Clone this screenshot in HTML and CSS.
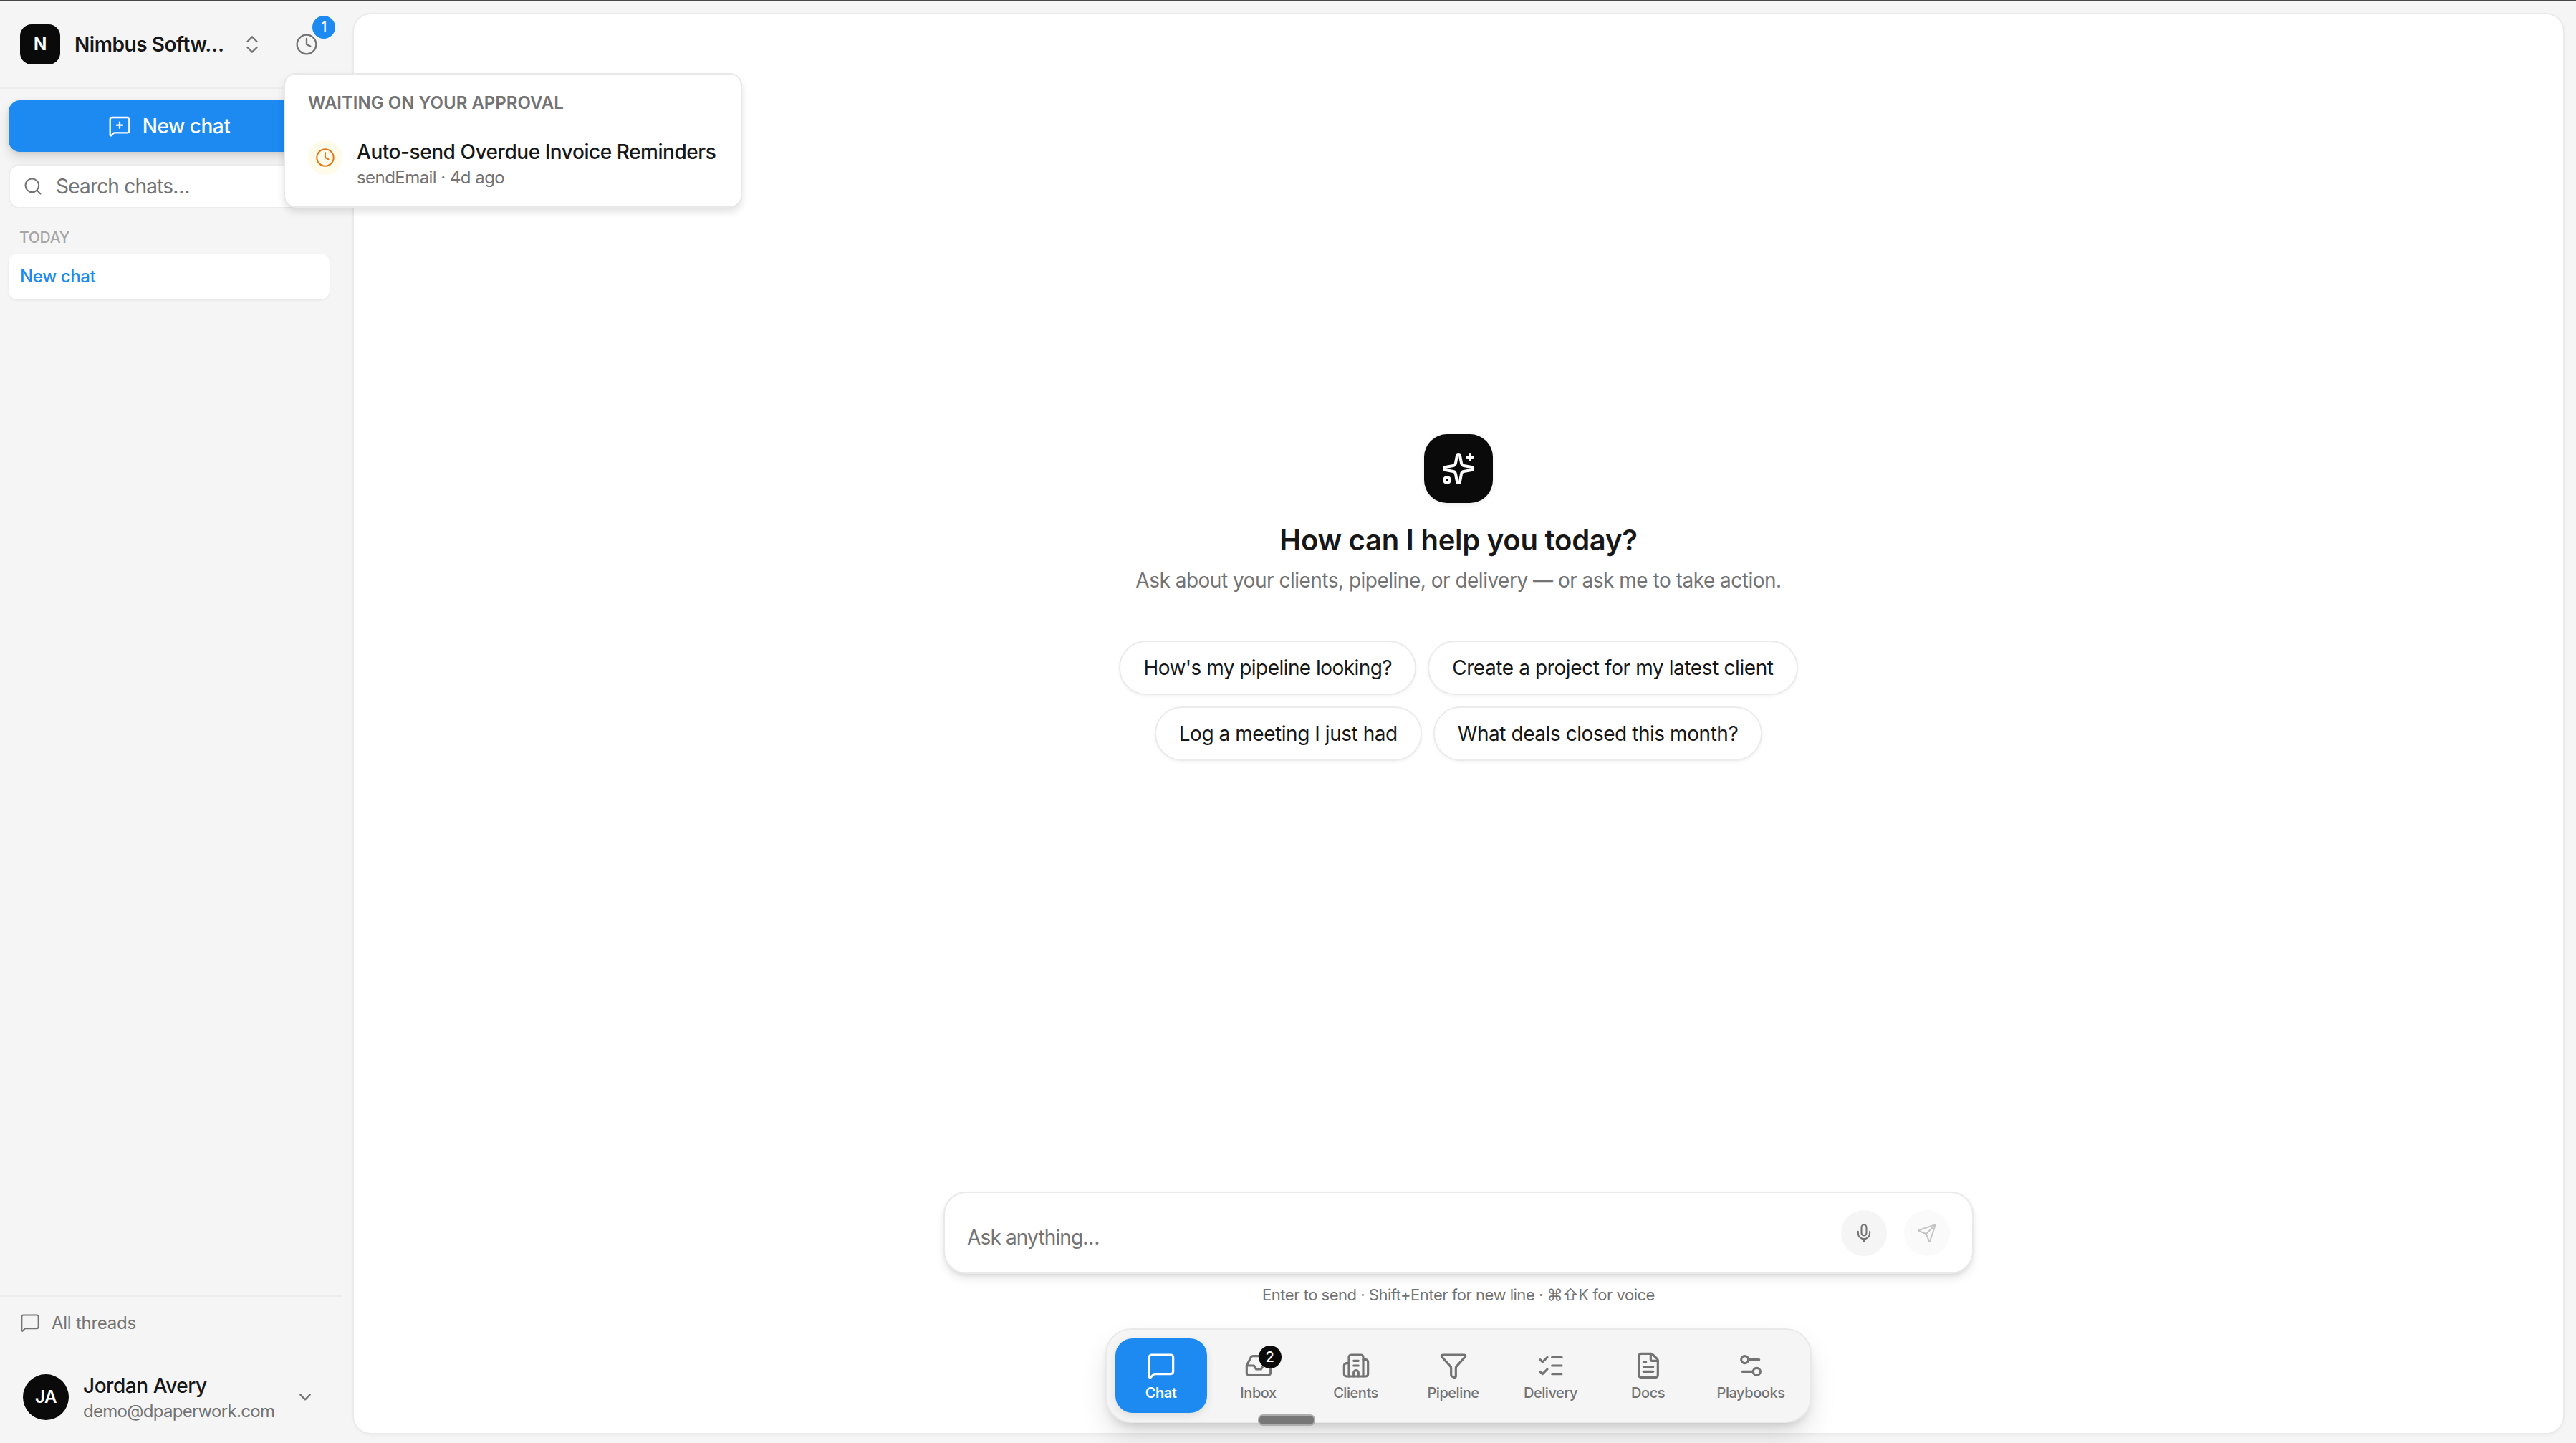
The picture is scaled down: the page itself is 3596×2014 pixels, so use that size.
FILE: index.html
```html
<!DOCTYPE html>
<html lang="en">
<head>
    <meta charset="UTF-8">
    <meta name="viewport" content="width=device-width, initial-scale=1.0">
    <title>Nimbus Software - Chat</title>
    <link rel="stylesheet" href="styles.css">
</head>
<body>
    <div class="app">
        <aside class="sidebar">
            <header class="workspace">
                <div class="logo">N</div>
                <div class="workspace-name">Nimbus Softw…</div>
                <svg class="icon icon-32" viewBox="0 0 24 24"><path d="m7 15 5 5 5-5"/><path d="m7 9 5-5 5 5"/></svg>
                <button class="approvals">
                    <svg class="icon icon-32" viewBox="0 0 24 24"><circle cx="12" cy="12" r="10"/><path d="M12 6v6l4 2"/></svg>
                    <span class="badge badge-blue">1</span>
                </button>
            </header>

            <nav class="chats">
                <button class="new-chat">
                    <svg class="icon icon-32" viewBox="0 0 24 24"><path d="M22 17a2 2 0 0 1-2 2H6.828a2 2 0 0 0-1.414.586l-2.202 2.202A.71.71 0 0 1 2 21.286V5a2 2 0 0 1 2-2h16a2 2 0 0 1 2 2z"/><path d="M12 8v6"/><path d="M9 11h6"/></svg>
                    <span>New chat</span>
                </button>
                <div class="search">
                    <svg class="icon icon-28" viewBox="0 0 24 24"><path d="m21 21-4.34-4.34"/><circle cx="11" cy="11" r="8"/></svg>
                    <span>Search chats…</span>
                </div>
                <div class="group-label">TODAY</div>
                <a class="chat-item">New chat</a>
            </nav>

            <footer class="sidebar-footer">
                <a class="all-threads">
                    <svg class="icon icon-28" viewBox="0 0 24 24"><path d="M22 17a2 2 0 0 1-2 2H6.828a2 2 0 0 0-1.414.586l-2.202 2.202A.71.71 0 0 1 2 21.286V5a2 2 0 0 1 2-2h16a2 2 0 0 1 2 2z"/></svg>
                    <span>All threads</span>
                </a>
                <div class="user">
                    <div class="avatar">JA</div>
                    <div class="user-info">
                        <div class="user-name">Jordan Avery</div>
                        <div class="user-email">demo@dpaperwork.com</div>
                    </div>
                    <svg class="icon icon-32" viewBox="0 0 24 24"><path d="m7 9.5 5 5 5-5"/></svg>
                </div>
            </footer>
        </aside>

        <main class="main">
            <section class="hero">
                <div class="hero-icon">
                    <svg class="icon icon-48" viewBox="0 0 24 24"><path d="M11.017 2.814a1 1 0 0 1 1.966 0l1.051 5.558a2 2 0 0 0 1.594 1.594l5.558 1.051a1 1 0 0 1 0 1.966l-5.558 1.051a2 2 0 0 0-1.594 1.594l-1.051 5.558a1 1 0 0 1-1.966 0l-1.051-5.558a2 2 0 0 0-1.594-1.594l-5.558-1.051a1 1 0 0 1 0-1.966l5.558-1.051a2 2 0 0 0 1.594-1.594z"/><path d="M20 2v4"/><path d="M22 4h-4"/><circle cx="4" cy="20" r="2"/></svg>
                </div>
                <h1>How can I help you today?</h1>
                <p>Ask about your clients, pipeline, or delivery — or ask me to take action.</p>
                <div class="suggestions">
                    <button class="chip">How's my pipeline looking?</button>
                    <button class="chip">Create a project for my latest client</button>
                    <button class="chip">Log a meeting I just had</button>
                    <button class="chip">What deals closed this month?</button>
                </div>
            </section>

            <div class="composer">
                <div class="composer-input">Ask anything…</div>
                <button class="round-button">
                    <svg class="icon icon-28" viewBox="0 0 24 24"><path d="M12 19v3"/><path d="M19 10v2a7 7 0 0 1-14 0v-2"/><rect x="9" y="2" width="6" height="13" rx="3"/></svg>
                </button>
                <button class="round-button disabled">
                    <svg class="icon icon-28" viewBox="0 0 24 24"><path d="M14.536 21.686a.5.5 0 0 0 .937-.024l6.5-19a.496.496 0 0 0-.635-.635l-19 6.5a.5.5 0 0 0-.024.937l7.93 3.18a2 2 0 0 1 1.112 1.11z"/><path d="m21.854 2.147-10.94 10.939"/></svg>
                </button>
            </div>
            <div class="hint">Enter to send · Shift+Enter for new line · ⌘⇧K for voice</div>

            <nav class="dock">
                <a class="dock-item active">
                    <svg class="icon icon-40" viewBox="0 0 24 24"><path d="M22 17a2 2 0 0 1-2 2H6.828a2 2 0 0 0-1.414.586l-2.202 2.202A.71.71 0 0 1 2 21.286V5a2 2 0 0 1 2-2h16a2 2 0 0 1 2 2z"/></svg>
                    <span>Chat</span>
                </a>
                <a class="dock-item">
                    <svg class="icon icon-40" viewBox="0 0 24 24"><path d="M22 12h-6l-2 3h-4l-2-3H2"/><path d="M5.45 5.11 2 12v6a2 2 0 0 0 2 2h16a2 2 0 0 0 2-2v-6l-3.45-6.89A2 2 0 0 0 16.76 4H7.24a2 2 0 0 0-1.79 1.11z"/></svg>
                    <span>Inbox</span>
                    <b class="badge badge-black">2</b>
                </a>
                <a class="dock-item">
                    <svg class="icon icon-40" viewBox="0 0 24 24"><path d="M10 12h4"/><path d="M10 8h4"/><path d="M14 21v-3a2 2 0 0 0-4 0v3"/><path d="M6 10H4a2 2 0 0 0-2 2v7a2 2 0 0 0 2 2h16a2 2 0 0 0 2-2V9a2 2 0 0 0-2-2h-2"/><path d="M6 21V5a2 2 0 0 1 2-2h8a2 2 0 0 1 2 2v16"/></svg>
                    <span>Clients</span>
                </a>
                <a class="dock-item">
                    <svg class="icon icon-40" viewBox="0 0 24 24"><path d="M10 20a1 1 0 0 0 .553.895l2 1A1 1 0 0 0 14 21v-7a2 2 0 0 1 .517-1.341L21.74 4.67A1 1 0 0 0 21 3H3a1 1 0 0 0-.742 1.67l7.225 7.989A2 2 0 0 1 10 14z"/></svg>
                    <span>Pipeline</span>
                </a>
                <a class="dock-item">
                    <svg class="icon icon-40" viewBox="0 0 24 24"><path d="M13 5h8"/><path d="M13 12h8"/><path d="M13 19h8"/><path d="m3 17 2 2 4-4"/><path d="m3 7 2 2 4-4"/></svg>
                    <span>Delivery</span>
                </a>
                <a class="dock-item">
                    <svg class="icon icon-40" viewBox="0 0 24 24"><path d="M6 22a2 2 0 0 1-2-2V4a2 2 0 0 1 2-2h8a2.4 2.4 0 0 1 1.704.706l3.588 3.588A2.4 2.4 0 0 1 20 8v12a2 2 0 0 1-2 2z"/><path d="M14 2v5a1 1 0 0 0 1 1h5"/><path d="M10 9H8"/><path d="M16 13H8"/><path d="M16 17H8"/></svg>
                    <span>Docs</span>
                </a>
                <a class="dock-item">
                    <svg class="icon icon-40" viewBox="0 0 24 24"><path d="M14 17H5"/><path d="M19 7h-9"/><circle cx="17" cy="17" r="3"/><circle cx="7" cy="7" r="3"/></svg>
                    <span>Playbooks</span>
                </a>
            </nav>
        </main>
    </div>

    <div class="popover">
        <div class="popover-title">WAITING ON YOUR APPROVAL</div>
        <div class="approval">
            <div class="approval-icon">
                <svg class="icon icon-28" viewBox="0 0 24 24"><circle cx="12" cy="12" r="10"/><path d="M12 6v6l4 2"/></svg>
            </div>
            <div>
                <div class="approval-name">Auto-send Overdue Invoice Reminders</div>
                <div class="approval-meta">sendEmail · 4d ago</div>
            </div>
        </div>
    </div>
    <div class="drag-handle"></div>
</body>
</html>
```
FILE: styles.css
```css
* {
    box-sizing: border-box;
}
body {
    margin: 0;
    width: 3596px;
    height: 2014px;
    overflow: hidden;
    position: relative;
    font-family: Inter, 'DejaVu Sans', sans-serif;
    font-size: 28px;
    letter-spacing: -0.45px;
    color: #171717;
    background: #f5f5f5;
    border-top: 2px solid #484646;
}
button {
    font: inherit;
    color: inherit;
    letter-spacing: inherit;
    border: none;
    background: none;
    padding: 0;
}
.app {
    display: flex;
    height: 2012px;
}
.icon {
    fill: none;
    stroke: currentColor;
    stroke-width: 1.75;
    stroke-linecap: round;
    stroke-linejoin: round;
    flex: none;
    display: block;
}
.icon-28 {
    width: 28px;
    height: 28px;
}
.icon-32 {
    width: 32px;
    height: 32px;
}
.icon-40 {
    width: 40px;
    height: 40px;
    stroke-width: 1.9;
}
.icon-48 {
    width: 48px;
    height: 48px;
    stroke-width: 2;
}
.badge {
    position: absolute;
    width: 32px;
    height: 32px;
    border-radius: 50%;
    color: #fff;
    font-size: 20px;
    font-weight: 500;
    line-height: 32px;
    text-align: center;
}
.badge-blue {
    background: #1c8af1;
    left: 24px;
    top: -24px;
}
.badge-black {
    background: #0a0a0a;
    left: 64px;
    top: 10px;
}

/* Sidebar */
.sidebar {
    width: 478px;
    flex: none;
    display: flex;
    flex-direction: column;
}
.workspace {
    height: 122px;
    border-bottom: 2px solid #ededed;
    padding-left: 28px;
    display: flex;
    align-items: center;
    color: #737373;
}
.logo {
    width: 56px;
    height: 56px;
    border-radius: 16px;
    background: #0a0a0a;
    color: #fff;
    font-size: 24px;
    font-weight: 700;
    line-height: 56px;
    text-align: center;
}
.workspace-name {
    width: 232px;
    margin-left: 20px;
    font-weight: 600;
    color: #171717;
}
.approvals {
    position: relative;
    margin-left: 44px;
}
.chats {
    padding: 16px 18px 0 12px;
    flex: 1;
}
.new-chat {
    width: 448px;
    height: 72px;
    border-radius: 16px;
    background: #1c8af1;
    color: #fff;
    font-weight: 500;
    display: flex;
    align-items: center;
    justify-content: center;
    gap: 16px;
    box-shadow: 0 8px 16px rgba(0, 0, 0, 0.12), 0 2px 6px rgba(0, 0, 0, 0.08);
}
.search {
    height: 62px;
    margin-top: 17px;
    padding-left: 18px;
    border: 2px solid #ececec;
    border-radius: 15px;
    background: #fff;
    color: #737373;
    letter-spacing: -0.8px;
    display: flex;
    align-items: center;
    gap: 18px;
}
.group-label {
    padding: 29px 0 10px 15px;
    font-size: 21px;
    line-height: 24px;
    font-weight: 500;
    letter-spacing: -0.3px;
    color: #a6a6a6;
}
.chat-item {
    display: block;
    height: 64px;
    line-height: 64px;
    padding-left: 16px;
    border-radius: 12px;
    background: #fff;
    color: #1c8af1;
    font-size: 24px;
    font-weight: 500;
    letter-spacing: -0.35px;
    box-shadow: 0 1px 3px rgba(0, 0, 0, 0.08);
}
.sidebar-footer {
    border-top: 2px solid #ededed;
    height: 206px;
}
.all-threads {
    height: 72px;
    padding-left: 28px;
    display: flex;
    align-items: center;
    gap: 16px;
    font-size: 24px;
    letter-spacing: -0.25px;
    color: #737373;
}
.user {
    height: 64px;
    margin-top: 36px;
    padding-left: 32px;
    display: flex;
    align-items: center;
    color: #737373;
}
.avatar {
    width: 64px;
    height: 64px;
    border-radius: 50%;
    background: #0a0a0a;
    color: #fff;
    font-size: 24px;
    font-weight: 600;
    line-height: 64px;
    text-align: center;
}
.user-info {
    width: 294px;
    margin-left: 20px;
    padding-top: 1px;
}
.user-name {
    font-weight: 500;
    line-height: 38px;
    color: #171717;
}
.user-email {
    font-size: 24px;
    line-height: 34px;
    letter-spacing: -0.7px;
}

/* Main panel */
.main {
    flex: 1;
    margin: 18px 18px 14px 16px;
    padding-bottom: 14px;
    border-radius: 24px;
    background: #fff;
    box-shadow: 0 0 0 2px #ebebeb, 0 2px 6px rgba(0, 0, 0, 0.06);
    display: flex;
    flex-direction: column;
    align-items: center;
}
.hero {
    flex: 1;
    padding-top: 586px;
    display: flex;
    flex-direction: column;
    align-items: center;
}
.hero-icon {
    width: 96px;
    height: 96px;
    border-radius: 32px;
    background: #0a0a0a;
    color: #fff;
    display: flex;
    align-items: center;
    justify-content: center;
    box-shadow: 0 2px 6px rgba(0, 0, 0, 0.08);
}
.hero h1 {
    margin: 24px 0 0;
    font-size: 40px;
    line-height: 56px;
    font-weight: 600;
    letter-spacing: -0.25px;
}
.hero p {
    margin: 8px 0 0;
    line-height: 40px;
    letter-spacing: -0.5px;
    color: #737373;
}
.suggestions {
    width: 1000px;
    margin-top: 64px;
    display: flex;
    flex-wrap: wrap;
    justify-content: center;
    gap: 16px;
}
.chip {
    height: 76px;
    padding: 0 32px;
    border: 2px solid #ebebeb;
    border-radius: 38px;
    background: #fff;
    box-shadow: 0 2px 4px rgba(0, 0, 0, 0.05);
}
.chip:first-child {
    letter-spacing: -0.55px;
}
.chip:nth-child(2) {
    letter-spacing: -0.4px;
}
.composer {
    width: 1438px;
    height: 115px;
    padding: 0 31px;
    border: 2px solid #e9e9e9;
    border-radius: 32px;
    background: #fff;
    display: flex;
    align-items: center;
    gap: 24px;
    box-shadow: 0 8px 14px -2px rgba(0, 0, 0, 0.1), 0 3px 6px -2px rgba(0, 0, 0, 0.1);
}
.composer-input {
    flex: 1;
    padding-top: 13px;
    letter-spacing: -0.85px;
    color: #737373;
}
.round-button {
    width: 64px;
    height: 64px;
    border-radius: 50%;
    background: #f5f5f5;
    color: #737373;
    display: flex;
    align-items: center;
    justify-content: center;
}
.round-button.disabled {
    background: #fafafa;
    color: #c4c4c4;
}
.hint {
    margin-top: 13px;
    font-size: 22px;
    line-height: 32px;
    letter-spacing: -0.48px;
    color: #737373;
}
.dock {
    height: 132px;
    margin-top: 31px;
    padding: 12px;
    border: 2px solid #e9e9e9;
    border-radius: 36px;
    background: #f5f5f5;
    display: flex;
    gap: 8px;
    box-shadow: 0 20px 40px -6px rgba(0, 0, 0, 0.15), 0 8px 14px -6px rgba(0, 0, 0, 0.15);
}
.dock-item {
    position: relative;
    min-width: 128px;
    height: 104px;
    padding: 18px 24px 0;
    border-radius: 24px;
    color: #737373;
    font-size: 20px;
    font-weight: 500;
    line-height: 24px;
    display: flex;
    flex-direction: column;
    align-items: center;
    gap: 6px;
}
.dock-item.active {
    background: #1c8af1;
    color: #fff;
    font-weight: 600;
    box-shadow: 0 4px 12px rgba(0, 0, 0, 0.1);
}
.drag-handle {
    position: absolute;
    left: 1756px;
    top: 1972px;
    width: 80px;
    height: 16px;
    border: 2px solid #adadad;
    border-radius: 7px;
    background: #777;
}

/* Approval popover */
.popover {
    position: absolute;
    left: 396px;
    top: 100px;
    width: 640px;
    height: 188px;
    padding: 24px 32px;
    border: 2px solid #e8e8e8;
    border-radius: 17px;
    background: #fff;
    white-space: nowrap;
    box-shadow: 0 6px 12px -1px rgba(0, 0, 0, 0.13);
}
.popover-title {
    font-size: 24px;
    line-height: 32px;
    font-weight: 600;
    letter-spacing: 0;
    color: #737373;
}
.approval {
    display: flex;
    gap: 20px;
    margin-top: 33px;
}
.approval-icon {
    width: 48px;
    height: 48px;
    margin-top: 3px;
    border-radius: 50%;
    background: #fffbeb;
    color: #e17718;
    display: flex;
    align-items: center;
    justify-content: center;
}
.approval-name {
    font-weight: 500;
    line-height: 38px;
}
.approval-meta {
    font-size: 24px;
    line-height: 34px;
    letter-spacing: -0.55px;
    color: #737373;
}
```
